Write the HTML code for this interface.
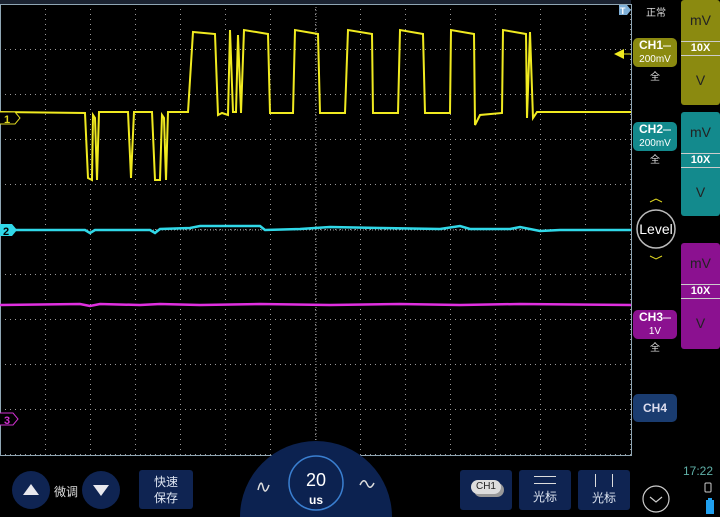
<!DOCTYPE html>
<html style="overflow:hidden"><head><meta charset="utf-8"><style>
html,body{margin:0;width:720px;height:517px;overflow:hidden}
body{background:#000;position:relative;font-family:"Liberation Sans","Noto Sans CJK SC",sans-serif;color:#fff}
.a{position:absolute}
.ch{position:absolute;left:633px;width:44px;border-radius:5px;text-align:center;font-weight:bold;font-size:12px;line-height:14px}
.ch small{display:block;font-weight:normal;font-size:10px;line-height:11px}
.q{position:absolute;left:646px;font-size:10px;color:#ddd}
.rb{position:absolute;left:681px;width:39px;border-radius:3px;text-align:center;color:#222}
.bt{position:absolute;background:#0f2452;border-radius:3px;color:#dfe6f2;font-size:12px;text-align:center}
</style></head><body>
<svg class="a" style="left:0;top:0" width="720" height="517">
<defs><pattern id="g" x="0" y="4" width="45" height="45" patternUnits="userSpaceOnUse"><line x1="0.5" y1="0" x2="0.5" y2="45" stroke="#999" stroke-width="1" stroke-dasharray="1 4"/><line x1="0" y1="0.5" x2="45" y2="0.5" stroke="#999" stroke-width="1" stroke-dasharray="1 4"/></pattern></defs>
<rect x="0" y="4" width="631" height="451" fill="url(#g)"/>
<line x1="316" y1="4" x2="316" y2="455" stroke="#999" stroke-dasharray="1 2"/>
<line x1="0" y1="230" x2="631" y2="230" stroke="#999" stroke-dasharray="1 2"/>
<rect x="0.5" y="4.5" width="631" height="451" fill="none" stroke="#8fa6b4" stroke-width="1"/>
<rect x="0" y="0" width="631" height="4" fill="#1a2230"/>
<path d="M0 112 L85 113 L88 178 L92 180 L93 115 L95 118 L97 180 L99 112 L128 112 L131 178 L134 112 L152 112 L155 180 L160 180 L162 115 L164 118 L166 180 L168 112 L188 112 L193 32 L215 34 L218 115 L222 113 L228 115 L230 30 L233 112 L236 112 L238 35 L241 113 L244 30 L268 34 L270 113 L293 113 L295 30 L318 34 L320 113 L345 113 L348 30 L372 34 L373 113 L398 113 L400 30 L423 34 L425 113 L450 113 L451 30 L474 34 L475 125 L480 115 L502 113 L503 30 L526 34 L527 118 L530 32 L533 118 L537 112 L631 112" fill="none" stroke="#f0ea20" stroke-width="2"/>
<path d="M0 230 L85 230 L90 233 L95 230 L150 230 L155 233 L160 229 L190 228 L200 226 L260 226 L265 230 L300 229 L330 227 L380 228 L440 229 L460 226 L470 229 L510 229 L520 227 L540 231 L560 230 L631 230" fill="none" stroke="#30d8e8" stroke-width="2.5"/>
<path d="M0 305 L80 304 L90 306 L100 304 L140 305 L160 304 L200 305 L260 304 L330 305 L400 304 L460 305 L520 304 L631 305" fill="none" stroke="#e030e0" stroke-width="2.5"/>
<path d="M0 112 H15 L20 118 L15 124 H0" fill="#000" stroke="#e0d820"/>
<text x="4" y="123" font-size="11" fill="#e0d820" font-weight="bold">1</text>
<path d="M0 224 H12 L17 230 L12 236 H0 Z" fill="#30d8e8"/>
<text x="3" y="235" font-size="11" fill="#000" font-weight="bold">2</text>
<path d="M0 413 H13 L18 419 L13 425 H0" fill="#000" stroke="#d030d0"/>
<text x="4" y="424" font-size="11" fill="#d030d0" font-weight="bold">3</text>
<path d="M619 5 H627 L631 10 L627 15 H619Z" fill="#7fb0d8"/><text x="620" y="14" font-size="9" fill="#fff" font-weight="bold">T</text>
<path d="M614 54 L624 49 V59 Z" fill="#f0ea20"/><line x1="624" y1="54" x2="631" y2="54" stroke="#f0ea20"/>
<circle cx="656" cy="229" r="19" fill="#000" stroke="#bbb" stroke-width="1.5"/>
<text x="656" y="234" font-size="14" fill="#fff" text-anchor="middle">Level</text>
<path d="M650 202 L656 199 L662 202" fill="none" stroke="#e0d820"/>
<path d="M650 256 L656 259 L662 256" fill="none" stroke="#e0d820"/>
<circle cx="316" cy="517" r="76" fill="#0c2250"/>
<circle cx="316" cy="483" r="27" fill="none" stroke="#3a7fd0" stroke-width="1.5"/>
<path d="M258 490 q3 -12 5 -3 q2 9 6 -2" fill="none" stroke="#ddd" stroke-width="1.5"/>
<path d="M360 485 q4 -8 7 -1 q3 7 7 -1" fill="none" stroke="#ddd" stroke-width="1.5"/>
<circle cx="31" cy="490" r="19" fill="#0f2452"/><path d="M23 495 L31 484 L39 495Z" fill="#e8e8ee"/>
<circle cx="101" cy="490" r="19" fill="#0f2452"/><path d="M93 485 L109 485 L101 496Z" fill="#e8e8ee"/>
<circle cx="656" cy="499" r="13" fill="none" stroke="#ccc" stroke-width="1.2"/><path d="M650 497 L656 502 L662 497" fill="none" stroke="#ccc" stroke-width="1.2"/>
<rect x="705" y="483" width="6" height="9" rx="1" fill="none" stroke="#ccc"/>
<rect x="706" y="500" width="8" height="14" fill="#20a0f0"/><rect x="708" y="498" width="4" height="2" fill="#20a0f0"/>
</svg>
<div class="q" style="top:4px">正常</div>
<div class="ch" style="top:38px;height:29px;background:#8b8a10">CH1<span style="font-size:8px">━</span><small>200mV</small></div>
<div class="q" style="top:68px;left:650px">全</div>
<div class="ch" style="top:122px;height:29px;background:#138a8d">CH2<span style="font-size:8px">━</span><small>200mV</small></div>
<div class="q" style="top:151px;left:650px">全</div>
<div class="ch" style="top:310px;height:29px;background:#8b1190">CH3<span style="font-size:8px">━</span><small>1V</small></div>
<div class="q" style="top:339px;left:650px">全</div>
<div class="ch" style="top:394px;height:28px;line-height:28px;background:#1a3c70;color:#dde">CH4</div>
<div class="rb" style="top:0;height:105px;background:#8b8a10">
<div style="margin-top:12px;font-size:14px">mV</div><div style="margin-top:13px;border-top:1px solid #ccc;border-bottom:1px solid #ccc;font-size:11px;font-weight:bold;color:#fff;line-height:13px">10X</div><div style="margin-top:16px;font-size:14px">V</div></div>
<div class="rb" style="top:112px;height:104px;background:#138a8d">
<div style="margin-top:12px;font-size:14px">mV</div><div style="margin-top:13px;border-top:1px solid #ccc;border-bottom:1px solid #ccc;font-size:11px;font-weight:bold;color:#fff;line-height:13px">10X</div><div style="margin-top:16px;font-size:14px">V</div></div>
<div class="rb" style="top:243px;height:106px;background:#8b1190">
<div style="margin-top:12px;font-size:14px">mV</div><div style="margin-top:13px;border-top:1px solid #ccc;border-bottom:1px solid #ccc;font-size:11px;font-weight:bold;color:#fff;line-height:13px">10X</div><div style="margin-top:16px;font-size:14px">V</div></div>
<div class="a" style="left:54px;top:483px;font-size:12px;color:#ddd">微调</div>
<div class="bt" style="left:139px;top:470px;width:54px;height:39px;line-height:16px;padding-top:4px;box-sizing:border-box">快速<br>保存</div>
<div class="a" style="left:303px;top:471px;font-size:18px;text-align:center;width:26px;line-height:18px">20<br><span style="font-size:12px;font-weight:bold">us</span></div>
<div class="bt" style="left:460px;top:470px;width:52px;height:40px"><div style="margin:10px auto 0;width:30px;height:14px;border-radius:8px;background:#ddd;color:#222;font-size:10px;line-height:14px;box-shadow:3px 3px 0 #999">CH1</div></div>
<div class="bt" style="left:519px;top:470px;width:52px;height:40px"><div style="margin:6px auto 0;width:22px;height:6px;border-top:1px solid #ddd;border-bottom:1px solid #ddd"></div><div style="margin-top:4px">光标</div></div>
<div class="bt" style="left:578px;top:470px;width:52px;height:40px"><div style="margin:4px auto 0;width:16px;height:13px;border-left:1px solid #ddd;border-right:1px solid #ddd"></div><div style="margin-top:2px">光标</div></div>
<div class="a" style="left:683px;top:464px;font-size:12px;color:#5fb0a8">17:22</div>
</body></html>
